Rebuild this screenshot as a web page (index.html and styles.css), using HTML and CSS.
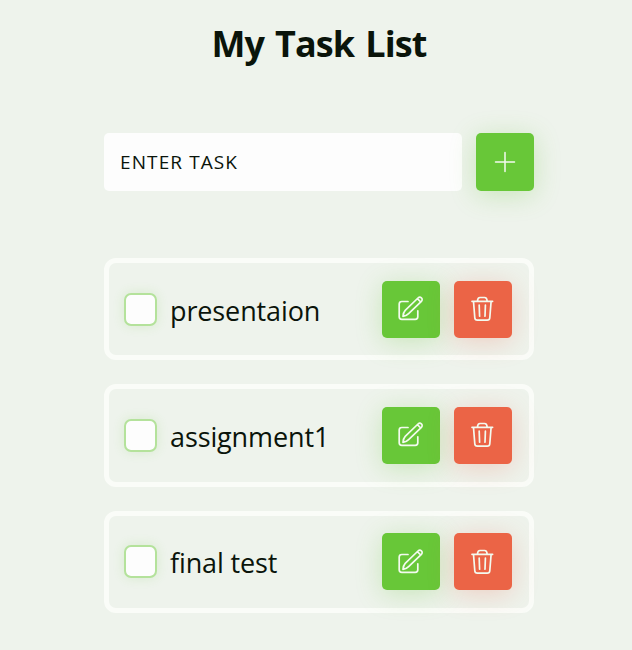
FILE: index.html
```html
<!DOCTYPE html>
<html lang="en">
<head>
<meta charset="utf-8">
<title>My Task List</title>
<link rel="stylesheet" href="styles.css">
</head>
<body>
<svg class="sprite" aria-hidden="true">
  <symbol id="edit" viewBox="0 0.8 26 26">
    <path d="M10 6.3H3.8a2.6 2.6 0 0 0-2.6 2.6v12.7a2.6 2.6 0 0 0 2.6 2.6h13.4a2.6 2.6 0 0 0 2.6-2.6V15.6"/>
    <path d="M5 21.2c.2-2.5.7-4.5 2.2-6.1L20 2.8c1-1 2.4-1.1 3.4-.2s1 2.5 0 3.5L10.6 18.4c-1.6 1.6-3.3 2.5-5.6 2.8zM19.4 3.4l3.3 3.4"/>
  </symbol>
  <symbol id="trash" viewBox="0 0.8 26 26">
    <path d="M2 6.1h20.6M7.4 6c.2-2.3 1-3.7 2.6-3.7h4.6c1.6 0 2.4 1.4 2.6 3.7M3.5 6.3l1.3 16.2a2.6 2.6 0 0 0 2.6 2.4h9.8a2.6 2.6 0 0 0 2.6-2.4L21.1 6.3M9.2 10l.4 11M15.4 10l-.4 11"/>
  </symbol>
</svg>
<main class="app">
  <h1 class="title">My Task List</h1>
  <form class="entry">
    <div class="field"><span>ENTER TASK</span></div>
    <button class="btn" type="button" aria-label="Add"><svg class="plus" viewBox="0 0 20 20"><path d="M10 .5v19M.5 10h19"/></svg></button>
  </form>
  <ul class="tasks">
    <li class="task">
      <span class="check"></span><span class="name">presentaion</span>
      <button class="btn" aria-label="Edit"><svg><use href="#edit"/></svg></button>
      <button class="btn danger" aria-label="Delete"><svg><use href="#trash"/></svg></button>
    </li>
    <li class="task">
      <span class="check"></span><span class="name">assignment1</span>
      <button class="btn" aria-label="Edit"><svg><use href="#edit"/></svg></button>
      <button class="btn danger" aria-label="Delete"><svg><use href="#trash"/></svg></button>
    </li>
    <li class="task">
      <span class="check"></span><span class="name">final test</span>
      <button class="btn" aria-label="Edit"><svg><use href="#edit"/></svg></button>
      <button class="btn danger" aria-label="Delete"><svg><use href="#trash"/></svg></button>
    </li>
  </ul>
</main>
</body>
</html>
```
FILE: styles.css
```css
* { box-sizing: border-box; }
body {
  margin: 0;
  height: 650px;
  overflow: hidden;
  background: #eef3ec;
  color: #0a140a;
  font-family: "Open Sans", "Noto Sans", sans-serif;
}
.sprite { display: none; }
.app { width: 430px; margin-left: 104px; padding-top: 20px; }
.title {
  margin: 0;
  height: 48px;
  line-height: 48px;
  text-align: center;
  font-size: 36px;
  font-weight: 700;
  letter-spacing: -0.9px;
  word-spacing: 2.5px;
  white-space: nowrap;
}
.entry { display: flex; gap: 14px; margin: 65px 0 67px; }
.field {
  flex: 1;
  height: 58px;
  padding-left: 16px;
  border-radius: 5px;
  background: #fdfdfd;
  font-size: 19px;
  line-height: 59px;
  letter-spacing: 1.1px;
}
.btn {
  display: flex;
  align-items: center;
  justify-content: center;
  flex: none;
  width: 58px;
  height: 57px;
  padding: 0;
  border: 0;
  border-radius: 5px;
  background: #68c738;
  box-shadow: 0 4px 26px rgba(104, 199, 56, 0.28);
}
.entry .btn { height: 58px; }
.btn svg {
  width: 26px;
  height: 26px;
  overflow: visible;
  fill: none;
  stroke: #f3faef;
  stroke-width: 1.7;
  stroke-linecap: round;
  stroke-linejoin: round;
}
.btn .plus { width: 20px; height: 20px; stroke-width: 1.5; }
.danger {
  margin-left: 14px;
  background: #eb6446;
  box-shadow: 0 4px 26px rgba(235, 100, 70, 0.25);
}
.tasks { display: grid; gap: 24px; margin: 0; padding: 0; list-style: none; }
.task {
  display: flex;
  align-items: center;
  height: 102.33px;
  padding: 0 17px 0 15px;
  border: 5px solid #fafcf8;
  border-radius: 12px;
}
.check {
  width: 33px;
  height: 33px;
  border: 2px solid #b4e29b;
  border-radius: 7px;
  background: #fdfdfd;
  background-clip: padding-box;
  box-shadow: 0 0 12px rgba(104, 199, 56, 0.16);
}
.name {
  flex: 1;
  margin-left: 13px;
  padding-top: 3px;
  font-size: 27px;
  line-height: 40px;
  letter-spacing: -0.12px;
  white-space: nowrap;
}
```
